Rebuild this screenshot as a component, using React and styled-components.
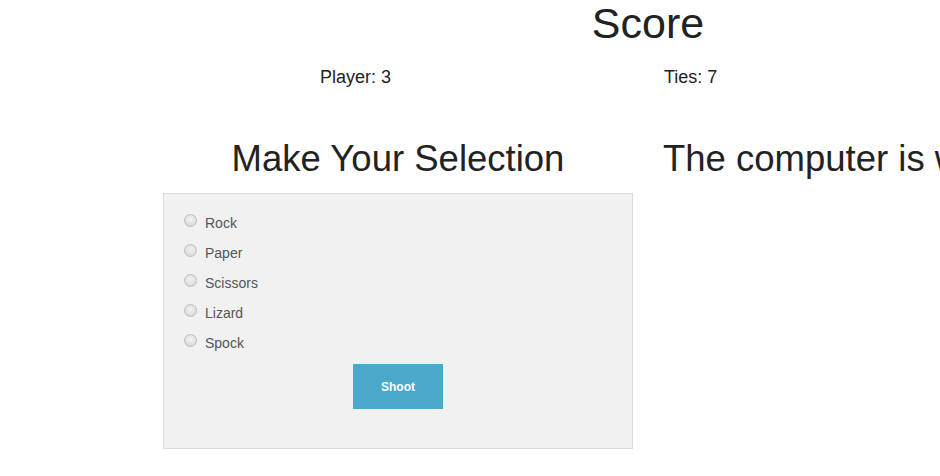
import React, { useState } from "react"
import styled, { createGlobalStyle } from "styled-components"

const choices = ["Rock", "Paper", "Scissors", "Lizard", "Spock"]

const App = () => {
    const [pick, setPick] = useState(null)

    return (
        <Page>
            <GlobalStyle />
            <ScoreTitle>Score</ScoreTitle>
            <ScoreRow>
                <ScoreItem>Player: 3</ScoreItem>
                <ScoreItem>Ties: 7</ScoreItem>
            </ScoreRow>
            <GameRow>
                <SelectionColumn>
                    <Heading $center>Make Your Selection</Heading>
                    <SelectionBox>
                        <ChoiceList>
                            {choices.map((c) => (
                                <Choice key={c}>
                                    <Radio
                                        type="radio"
                                        name="choice"
                                        checked={pick === c}
                                        onChange={() => setPick(c)}
                                    />
                                    {c}
                                </Choice>
                            ))}
                        </ChoiceList>
                        <ShootButton>Shoot</ShootButton>
                    </SelectionBox>
                </SelectionColumn>
                <ComputerColumn>
                    <Heading>The computer is waiting...</Heading>
                </ComputerColumn>
            </GameRow>
        </Page>
    )
}

const GlobalStyle = createGlobalStyle`
    html, body {
        margin: 0;
        padding: 0;
        overflow: hidden;
        background: #fff;
    }

    body {
        font-family: "Liberation Sans", Arial, sans-serif;
        color: #222;
    }
`

const Page = styled.div`
    width: 1296px;
    white-space: nowrap;
`

const ScoreTitle = styled.h1`
    margin: 0;
    font-size: 43px;
    font-weight: 400;
    line-height: 46px;
    text-align: center;
    color: #222;
`

const ScoreRow = styled.div`
    display: grid;
    grid-template-columns: repeat(2, 344px);
    padding-left: 320px;
    margin-top: 19px;
`

const ScoreItem = styled.div`
    font-size: 18px;
    line-height: 25px;
    color: #222;
`

const GameRow = styled.div`
    display: flex;
    gap: 30px;
    padding-left: 163px;
    margin-top: 49px;
`

const SelectionColumn = styled.div`
    width: 470px;
    display: flex;
    flex-direction: column;
`

const ComputerColumn = styled.div`
    flex: 1;
`

const Heading = styled.h2`
    margin: 0;
    font-size: 36.5px;
    font-weight: 400;
    line-height: 40px;
    color: #222;
    text-align: ${(p) => (p.$center ? "center" : "left")};
`

const SelectionBox = styled.div`
    margin-top: 14px;
    height: 256px;
    box-sizing: border-box;
    background: #f1f1f1;
    border: 1px solid #dcdcdc;
    padding: 19px 20px 0;
    display: flex;
    flex-direction: column;
`

const ChoiceList = styled.div`
    display: flex;
    flex-direction: column;
    gap: 10px;
`

const Choice = styled.label`
    display: flex;
    align-items: flex-start;
    height: 20px;
    font-size: 14px;
    line-height: 20px;
    color: #555;
    cursor: pointer;
`

const Radio = styled.input`
    appearance: none;
    margin: 1px 8px 0 0;
    width: 13px;
    height: 13px;
    border-radius: 50%;
    border: 1px solid #bdbdbd;
    background: radial-gradient(circle at 50% 40%, #f2f2f2 0%, #dcdcdc 70%, #cfcfcf 100%);
    box-sizing: border-box;
    flex: none;

    &:checked {
        background: radial-gradient(circle, #444 0 3px, #e6e6e6 3.5px);
    }
`

const ShootButton = styled.button`
    align-self: center;
    margin-top: 11px;
    width: 90px;
    height: 45px;
    border: none;
    background: #4aa9cb;
    color: #fff;
    font-family: "Liberation Sans", Arial, sans-serif;
    font-size: 12px;
    font-weight: 700;
    cursor: pointer;
`

export default App
